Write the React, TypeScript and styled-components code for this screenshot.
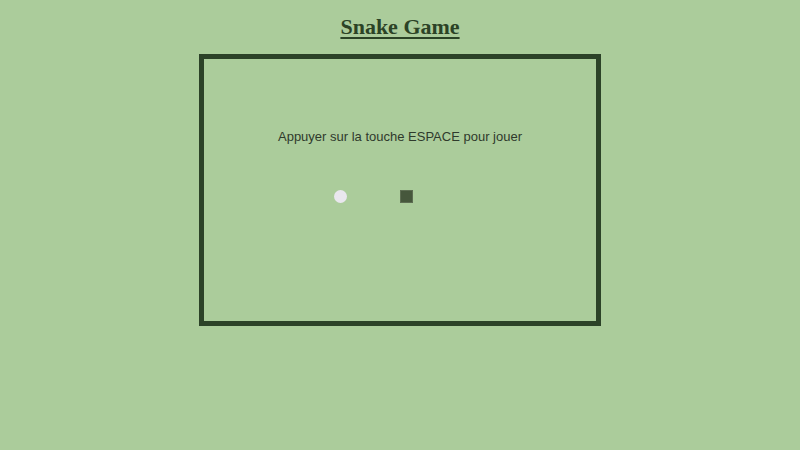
import React from "react";
import styled, { createGlobalStyle } from "styled-components";

const Global = createGlobalStyle`
  html, body { margin: 0; padding: 0; background: #abcc9b; }
  body { width: 800px; height: 450px; overflow: hidden; }
`;

const Page = styled.main`
  display: flex;
  flex-direction: column;
  align-items: center;
  padding-top: 14px;
`;

const Title = styled.h1`
  margin: 0 0 14px 0;
  font-family: "Liberation Serif", "Times New Roman", serif;
  font-size: 22px;
  font-weight: bold;
  line-height: 26px;
  color: #2b4326;
  text-decoration: underline;
  text-decoration-thickness: 2px;
  text-underline-offset: 3px;
`;

const Board = styled.div`
  position: relative;
  box-sizing: border-box;
  width: 402px;
  height: 272px;
  border: 5px solid #2c4228;
  display: flex;
  justify-content: center;
`;

const Message = styled.p`
  margin: 70px 0 0 0;
  font-family: "Liberation Sans", Arial, sans-serif;
  font-size: 13px;
  color: #2f3a2c;
`;

const Cell = styled.div<{ $x: number; $y: number }>`
  position: absolute;
  left: ${(p) => p.$x}px;
  top: ${(p) => p.$y}px;
  width: 13px;
  height: 13px;
  box-sizing: border-box;
`;

const Food = styled(Cell)`
  border-radius: 50%;
  background: #e9e7ee;
`;

const SnakeSegment = styled(Cell)`
  background: #46573c;
  border: 1px solid #5d6d52;
`;

export default function App() {
  return (
    <>
      <Global />
      <Page>
        <Title>Snake Game</Title>
        <Board>
          <Message>Appuyer sur la touche ESPACE pour jouer</Message>
          <Food $x={130} $y={131} />
          <SnakeSegment $x={196} $y={131} />
        </Board>
      </Page>
    </>
  );
}
